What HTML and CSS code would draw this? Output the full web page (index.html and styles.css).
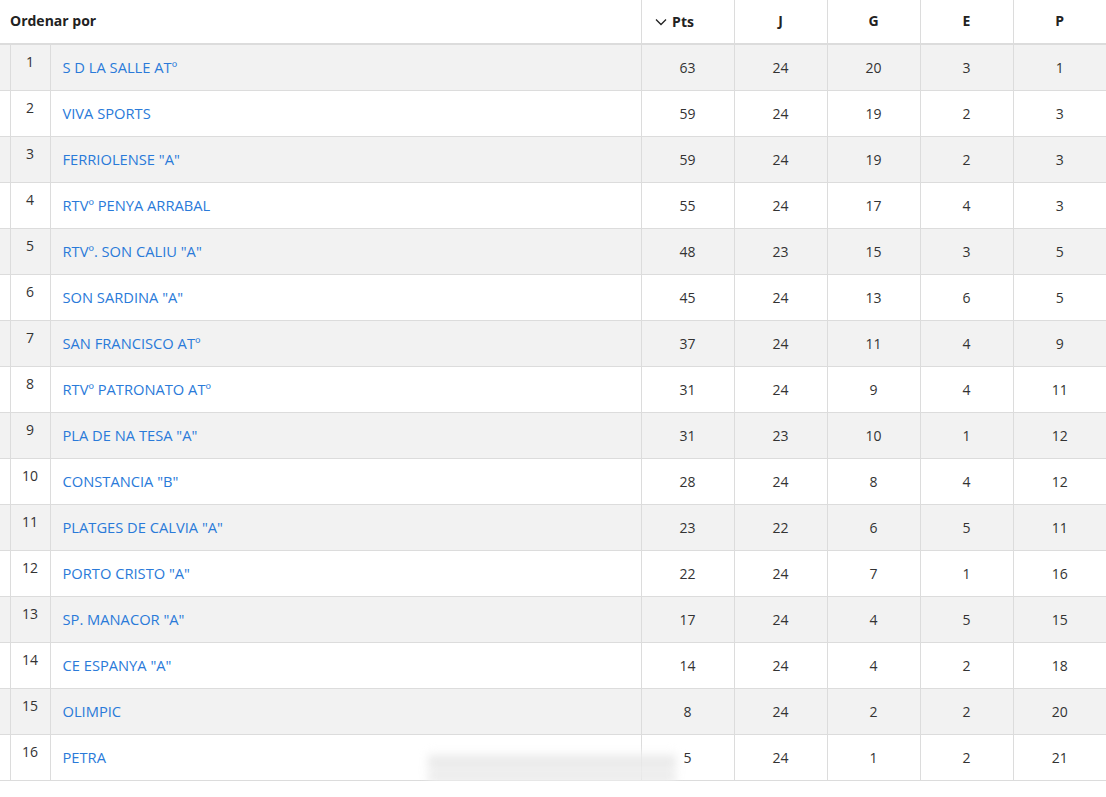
FILE: index.html
```html
<!DOCTYPE html>
<html lang="es">
<head>
<meta charset="utf-8">
<title>Clasificación</title>
<link rel="stylesheet" href="styles.css">
</head>
<body>
<div class="wrap">
<table class="standings">
  <colgroup>
    <col class="c-pad"><col class="c-pos"><col class="c-name">
    <col class="c-num"><col class="c-num"><col class="c-num"><col class="c-num"><col class="c-num">
  </colgroup>
  <thead>
    <tr>
      <th class="h-sort" colspan="3">Ordenar por</th>
      <th class="h-num h-pts"><span class="chev"><svg width="12" height="8" viewBox="0 0 12 8"><path d="M1 1.5 L6 6.5 L11 1.5" fill="none" stroke="#222" stroke-width="1.3"/></svg></span>Pts</th>
      <th class="h-num">J</th>
      <th class="h-num">G</th>
      <th class="h-num">E</th>
      <th class="h-num">P</th>
    </tr>
  </thead>
  <tbody>
    <tr><td class="pad"></td><td class="pos">1</td><td class="name"><a href="#">S D LA SALLE ATº</a></td><td>63</td><td>24</td><td>20</td><td>3</td><td>1</td></tr>
    <tr><td class="pad"></td><td class="pos">2</td><td class="name"><a href="#">VIVA SPORTS</a></td><td>59</td><td>24</td><td>19</td><td>2</td><td>3</td></tr>
    <tr><td class="pad"></td><td class="pos">3</td><td class="name"><a href="#">FERRIOLENSE "A"</a></td><td>59</td><td>24</td><td>19</td><td>2</td><td>3</td></tr>
    <tr><td class="pad"></td><td class="pos">4</td><td class="name"><a href="#">RTVº PENYA ARRABAL</a></td><td>55</td><td>24</td><td>17</td><td>4</td><td>3</td></tr>
    <tr><td class="pad"></td><td class="pos">5</td><td class="name"><a href="#">RTVº. SON CALIU "A"</a></td><td>48</td><td>23</td><td>15</td><td>3</td><td>5</td></tr>
    <tr><td class="pad"></td><td class="pos">6</td><td class="name"><a href="#">SON SARDINA "A"</a></td><td>45</td><td>24</td><td>13</td><td>6</td><td>5</td></tr>
    <tr><td class="pad"></td><td class="pos">7</td><td class="name"><a href="#">SAN FRANCISCO ATº</a></td><td>37</td><td>24</td><td>11</td><td>4</td><td>9</td></tr>
    <tr><td class="pad"></td><td class="pos">8</td><td class="name"><a href="#">RTVº PATRONATO ATº</a></td><td>31</td><td>24</td><td>9</td><td>4</td><td>11</td></tr>
    <tr><td class="pad"></td><td class="pos">9</td><td class="name"><a href="#">PLA DE NA TESA "A"</a></td><td>31</td><td>23</td><td>10</td><td>1</td><td>12</td></tr>
    <tr><td class="pad"></td><td class="pos">10</td><td class="name"><a href="#">CONSTANCIA "B"</a></td><td>28</td><td>24</td><td>8</td><td>4</td><td>12</td></tr>
    <tr><td class="pad"></td><td class="pos">11</td><td class="name"><a href="#">PLATGES DE CALVIA "A"</a></td><td>23</td><td>22</td><td>6</td><td>5</td><td>11</td></tr>
    <tr><td class="pad"></td><td class="pos">12</td><td class="name"><a href="#">PORTO CRISTO "A"</a></td><td>22</td><td>24</td><td>7</td><td>1</td><td>16</td></tr>
    <tr><td class="pad"></td><td class="pos">13</td><td class="name"><a href="#">SP. MANACOR "A"</a></td><td>17</td><td>24</td><td>4</td><td>5</td><td>15</td></tr>
    <tr><td class="pad"></td><td class="pos">14</td><td class="name"><a href="#">CE ESPANYA "A"</a></td><td>14</td><td>24</td><td>4</td><td>2</td><td>18</td></tr>
    <tr><td class="pad"></td><td class="pos">15</td><td class="name"><a href="#">OLIMPIC</a></td><td>8</td><td>24</td><td>2</td><td>2</td><td>20</td></tr>
    <tr><td class="pad"></td><td class="pos">16</td><td class="name"><a href="#">PETRA</a></td><td>5</td><td>24</td><td>1</td><td>2</td><td>21</td></tr>
  </tbody>
</table>
<div class="watermark"></div>
</div>
</body>
</html>
```
FILE: styles.css
```css
html, body {
  margin: 0;
  padding: 0;
  background: #fff;
}
body {
  font-family: "Open Sans", "Noto Sans", "Liberation Sans", sans-serif;
  font-size: 14px;
  color: #333;
}
.wrap {
  position: relative;
  width: 1106px;
}
.standings {
  width: 1106px;
  border-collapse: collapse;
  table-layout: fixed;
}
.c-pad { width: 10px; }
.c-pos { width: 40px; }
.c-name { width: 591px; }
.c-num { width: 93px; }
.standings th {
  height: 41px;
  padding: 0 0 2px 0;
  font-weight: 700;
  font-size: 14px;
  color: #222;
  border-bottom: 2px solid #dcdcdc;
  vertical-align: middle;
}
.h-sort {
  text-align: left;
  padding-left: 10px !important;
}
.h-num {
  text-align: center;
  border-left: 1px solid #dcdcdc;
}
.standings th.h-pts {
  padding-right: 26px;
}
.chev {
  display: inline-block;
  margin-right: 5px;
  vertical-align: 1px;
}
.standings td {
  height: 44px;
  padding: 0 0 1px 0;
  text-align: center;
  vertical-align: middle;
  border-bottom: 1px solid #dcdcdc;
  border-left: 1px solid #dcdcdc;
  font-size: 14px;
  color: #333;
}
.standings td.pad {
  border-left: none;
}
.standings td.pos {
  vertical-align: top;
  padding-top: 7px;
  height: 37px;
}
.standings td.name {
  text-align: left;
  padding-left: 12px;
  font-size: 14.7px;
}
.name a {
  color: #2a7ad9;
  text-decoration: none;
}
.standings tbody tr:nth-child(odd) {
  background: #f2f2f2;
}
.watermark {
  position: absolute;
  left: 428px;
  top: 752px;
  width: 248px;
  height: 32px;
  background: linear-gradient(180deg, rgba(250,250,250,0.9) 0%, rgba(222,222,222,0.8) 35%, rgba(245,245,245,0.9) 55%, rgba(225,225,225,0.8) 80%, rgba(250,250,250,0.9) 100%);
  filter: blur(4px);
}
```
